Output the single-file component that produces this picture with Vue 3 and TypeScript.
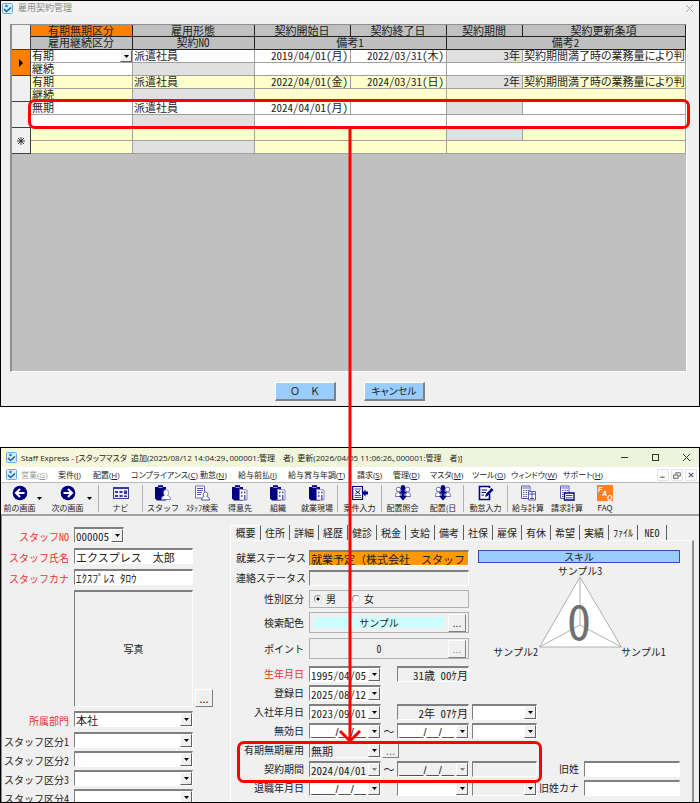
<script setup lang="ts">
import { ref } from 'vue'

interface Contract {
  term: string
  keep: string
  form: string
  start: string
  end: string
  period: string
  clause: string
}

interface Tool {
  icon: string
  label: string
  width: number
  menu?: boolean
  sep?: boolean
}

const contracts: Contract[] = [
  { term: '有期', keep: '継続', form: '派遣社員', start: '2019/04/01(月)', end: '2022/03/31(木)', period: '3年', clause: '契約期間満了時の業務量により判' },
  { term: '有期', keep: '継続', form: '派遣社員', start: '2022/04/01(金)', end: '2024/03/31(日)', period: '2年', clause: '契約期間満了時の業務量により判' },
  { term: '無期', keep: '', form: '派遣社員', start: '2024/04/01(月)', end: '', period: '', clause: '' },
  { term: '', keep: '', form: '', start: '', end: '', period: '', clause: '' },
]

const menus = [
  { name: '営業', key: 'G', width: 37, off: true },
  { name: '案件', key: 'J', width: 35 },
  { name: '配置', key: 'H', width: 38 },
  { name: 'コンプライアンス', key: 'C', width: 69 },
  { name: '勤怠', key: 'N', width: 38 },
  { name: '給与前払', key: 'I', width: 50 },
  { name: '給与賞与年調', key: 'T', width: 69 },
  { name: '請求', key: 'S', width: 36 },
  { name: '管理', key: 'D', width: 37 },
  { name: 'マスタ', key: 'M', width: 42 },
  { name: 'ツール', key: 'O', width: 39 },
  { name: 'ウィンドウ', key: 'W', width: 52 },
  { name: 'サポート', key: 'H', width: 44 },
]

const tools: Tool[] = [
  { icon: 'back', label: '前の画面', width: 46, menu: true },
  { icon: 'next', label: '次の画面', width: 51, menu: true, sep: true },
  { icon: 'navi', label: 'ナビ', width: 44, sep: true },
  { icon: 'staff', label: 'スタッフ', width: 40 },
  { icon: 'search', label: 'ｽﾀｯﾌ検索', width: 38 },
  { icon: 'building', label: '得意先', width: 38 },
  { icon: 'building', label: '組織', width: 38 },
  { icon: 'building', label: '就業現場', width: 41, sep: true },
  { icon: 'entry', label: '案件入力', width: 44, sep: true },
  { icon: 'people', label: '配置照会', width: 41 },
  { icon: 'people', label: '配置(日', width: 41, sep: true },
  { icon: 'pencil', label: '勤怠入力', width: 44, sep: true },
  { icon: 'payroll', label: '給与計算', width: 40 },
  { icon: 'invoice', label: '請求計算', width: 38 },
  { icon: 'faq', label: 'FAQ', width: 38 },
]

const tabs = ['概要', '住所', '詳細', '経歴', '健診', '税金', '支給', '備考', '社保', '雇保', '有休', '希望', '実績', 'ﾌｧｲﾙ', 'NEO']
const activeTab = ref('概要')
const gender = ref('男')
const categories = ['スタッフ区分1', 'スタッフ区分2', 'スタッフ区分3', 'スタッフ区分4']
const blank = '____/__/__'
</script>

<template>
  <main class="page">
    <section class="dialog">
      <header class="dialog-title">
        <svg class="app-icon" viewBox="0 0 11 11" aria-hidden="true">
          <rect x=".5" y=".5" width="10" height="10" rx="1" fill="#d8ecfc" stroke="#6aaee6" />
          <path d="M2 6 4.500 8.500 9 4.500" fill="none" stroke="#0b62b4" stroke-width="1.600" />
          <circle cx="4.500" cy="3" r="1.300" fill="#1c7fd0" />
        </svg>
        <h1>雇用契約管理</h1>
        <button class="bare close" type="button" aria-label="閉じる">
          <svg viewBox="0 0 9 9"><path d="M1 1 8 8M8 1 1 8" stroke="#a4a4a4" fill="none" /></svg>
        </button>
      </header>

      <div class="grid-panel">
        <table class="contracts">
          <colgroup>
            <col class="c-mark" /><col class="c-term" /><col class="c-form" /><col class="c-date" />
            <col class="c-date" /><col class="c-period" /><col />
          </colgroup>
          <thead>
            <tr>
              <th rowspan="2" class="mark"></th>
              <th class="hot">有期無期区分</th>
              <th>雇用形態</th>
              <th>契約開始日</th>
              <th>契約終了日</th>
              <th>契約期間</th>
              <th>契約更新条項</th>
            </tr>
            <tr>
              <th>雇用継続区分</th>
              <th>契約NO</th>
              <th colspan="2">備考1</th>
              <th colspan="2">備考2</th>
            </tr>
          </thead>
          <tbody v-for="(c, i) in contracts" :key="i" :class="{ alt: i % 2 === 1 }">
            <tr>
              <th rowspan="2" class="mark" :class="{ hot: i === 0 }">
                <svg v-if="i === 0" viewBox="0 0 6 8" width="6" height="8"><path d="M1 0 5 4 1 8Z" /></svg>
                <svg v-else-if="i === 3" viewBox="0 0 8 8" width="8" height="8"><path d="M4 0V8M0 4H8M1 1 7 7M7 1 1 7" stroke="#222" stroke-width=".9" /></svg>
              </th>
              <td>
                <span v-if="i === 0" class="combo cell-combo">
                  <select aria-label="有期無期区分"><option>{{ c.term }}</option></select>
                  <i class="drop"><svg viewBox="0 0 5 3"><path d="M0 0H5L2.500 3Z" /></svg></i>
                </span>
                <template v-else>{{ c.term }}</template>
              </td>
              <td>{{ c.form }}</td>
              <td class="num">{{ c.start }}</td>
              <td class="num">{{ c.end }}</td>
              <td class="num locked">{{ c.period }}</td>
              <td class="clause">{{ c.clause }}</td>
            </tr>
            <tr>
              <td>{{ c.keep }}</td>
              <td class="locked"></td>
              <td colspan="2"></td>
              <td colspan="2"></td>
            </tr>
          </tbody>
        </table>
      </div>

      <footer class="dialog-actions">
        <button type="button" class="blue plain">Ｏ　Ｋ</button>
        <button type="button" class="blue kana">キャンセル</button>
      </footer>
    </section>

    <section class="app">
      <header class="app-title">
        <svg class="app-icon" viewBox="0 0 11 11" aria-hidden="true">
          <rect x=".5" y=".5" width="10" height="10" rx="1" fill="#d8ecfc" stroke="#6aaee6" />
          <path d="M2 6 4.500 8.500 9 4.500" fill="none" stroke="#0b62b4" stroke-width="1.600" />
          <circle cx="4.500" cy="3" r="1.300" fill="#1c7fd0" />
        </svg>
        <h2>Staff Express - [スタッフマスタ&ensp;追加(2025/08/12 14:04:29、000001:管理　者)&ensp;更新(2026/04/05 11:06:26、000001:管理　者)]</h2>
        <div class="win-buttons">
          <button class="bare" type="button" aria-label="最小化"><svg viewBox="0 0 9 9"><path d="M1 4.500H8" stroke="#333" fill="none" /></svg></button>
          <button class="bare" type="button" aria-label="最大化"><svg viewBox="0 0 9 9"><rect x="1.500" y="1.500" width="6" height="6" stroke="#333" fill="none" /></svg></button>
          <button class="bare" type="button" aria-label="終了"><svg viewBox="0 0 9 9"><path d="M1 1 8 8M8 1 1 8" stroke="#333" fill="none" /></svg></button>
        </div>
      </header>

      <nav class="menu">
        <svg class="app-icon" viewBox="0 0 11 11" aria-hidden="true">
          <rect x=".5" y=".5" width="10" height="10" rx="1" fill="#d8ecfc" stroke="#6aaee6" />
          <path d="M2 6 4.500 8.500 9 4.500" fill="none" stroke="#0b62b4" stroke-width="1.600" />
          <circle cx="4.500" cy="3" r="1.300" fill="#1c7fd0" />
        </svg>
        <button
          v-for="m in menus"
          :key="m.name"
          type="button"
          class="bare menu-item"
          :class="{ off: m.off }"
          :style="{ width: m.width + 'px' }"
        >{{ m.name }}(<u>{{ m.key }}</u>)</button>
        <div class="child-buttons">
          <button type="button" aria-label="子画面を最小化"><svg viewBox="0 0 9 9"><path d="M2 6.500H6" stroke="#556" fill="none" /></svg></button>
          <button type="button" aria-label="子画面を元に戻す"><svg viewBox="0 0 9 9"><path d="M3.500 4V2.500H7.500V5.500H6M1.500 4.500H5.500V7.500H1.500Z" stroke="#556" fill="none" stroke-width=".8" /></svg></button>
          <button type="button" aria-label="子画面を閉じる"><svg viewBox="0 0 9 9"><path d="M2.500 2.500 6.500 6.500M6.500 2.500 2.500 6.500" stroke="#556" fill="none" /></svg></button>
        </div>
      </nav>

      <div class="toolbar">
        <div
          v-for="t in tools"
          :key="t.label"
          class="tool-slot"
          :class="{ sep: t.sep }"
          :style="{ width: t.width + 'px' }"
        >
          <button type="button" class="bare tool">
            <svg viewBox="0 0 16 16" class="tool-icon" aria-hidden="true">
              <template v-if="t.icon === 'back'">
                <circle cx="8" cy="8" r="7.300" fill="#000080" />
                <path d="M12.500 8H4.500M8 4 4 8 8 12" fill="none" stroke="#fff" stroke-width="2" />
              </template>
              <template v-else-if="t.icon === 'next'">
                <circle cx="8" cy="8" r="7.300" fill="#000080" />
                <path d="M3.500 8H11.500M8 4 12 8 8 12" fill="none" stroke="#fff" stroke-width="2" />
              </template>
              <template v-else-if="t.icon === 'navi'">
                <rect x=".5" y="2.500" width="15" height="11" fill="#e8e8ff" stroke="#3a3a9c" />
                <path d="M1 3.500H15" stroke="#3a3a9c" />
                <path d="M2 6H5V8H2ZM6.500 6H9.500V8H6.500ZM11 5.500H14V9H11ZM2 10H5V12H2ZM6.500 10H9.500V12H6.500ZM11 10.500H14V12H11Z" fill="#3a3a9c" />
              </template>
              <template v-else-if="t.icon === 'staff'">
                <path d="M0 2H3V.3H8V2H11V15.500H2L0 13.500Z" fill="#000080" />
                <path d="M3.500 2.500H7.500" stroke="#c8c8f0" stroke-width=".8" />
                <path d="M6.500 14.500C6.500 11.500 8 11 9.500 10.500 7.500 8 9 4.500 11 4.500S14.500 8 12.500 10.500C14 11 15.500 11.500 15.500 14.500Z" fill="#fff" stroke="#6a6ab8" stroke-width=".8" />
              </template>
              <template v-else-if="t.icon === 'search'">
                <path d="M1.500 1H10.500V13H1.500Z" fill="#fff" stroke="#6a6ab8" />
                <path d="M3 3.500H9M3 5.500H9M3 7.500H8M3 9.500H7" stroke="#3a3a9c" stroke-width=".9" />
                <path d="M7.500 15C7.500 12.500 9 12 10 11.500 8.500 9.500 9.500 7 11.500 7S14.500 9.500 13 11.500C14 12 15.500 12.500 15.500 15Z" fill="#fff" stroke="#3a3a9c" stroke-width=".9" />
              </template>
              <template v-else-if="t.icon === 'building'">
                <path d="M0 2H3V.3H8V2H11V15.500H2L0 13.500Z" fill="#000080" />
                <path d="M3.500 2.500H7.500" stroke="#c8c8f0" stroke-width=".8" />
                <path d="M7.500 4 15 5V15H7.500Z" fill="#fff" stroke="#6a6ab8" stroke-width=".8" />
                <path d="M9 6.500H10.500V8.500H9ZM12 6.500H13.500V8.500H12ZM9 10H10.500V12H9ZM12 10H13.500V15H12Z" fill="#5a5ab0" />
              </template>
              <template v-else-if="t.icon === 'entry'">
                <path d="M.7 1.500H10.500V14.500H.7Z" fill="#fff" stroke="#000080" stroke-width="1.200" />
                <path d="M2.500 4H9M2.500 10.500H9M2.500 12.500H9" stroke="#3a3a9c" stroke-width=".9" />
                <path d="M3.500 5.500 8 9M8 5.500 3.500 9" stroke="#000080" />
                <path d="M16 6.500V9.500H13.500V11.500L10 8 13.500 4.500V6.500Z" fill="#000080" />
              </template>
              <template v-else-if="t.icon === 'people'">
                <circle cx="3.500" cy="4.500" r="2.300" fill="#fff" stroke="#5a5ab0" stroke-width=".9" />
                <circle cx="12.500" cy="4.500" r="2.300" fill="#fff" stroke="#5a5ab0" stroke-width=".9" />
                <path d="M.5 11.500C.5 8 2 7 4 7L6 10 4 11.500Z M15.500 11.500C15.500 8 14 7 12 7L10 10 12 11.500Z" fill="#fff" stroke="#5a5ab0" stroke-width=".9" />
                <path d="M8 0C10.500 0 10.800 3 9.500 5.500L12 8.500H9.500V11H12L8 15.500 4 11H6.500V8.500H4L6.500 5.500C5.200 3 5.500 0 8 0Z" fill="#000080" />
              </template>
              <template v-else-if="t.icon === 'pencil'">
                <path d="M11.500 9V14.500H1.500V1.500H11.500V3" fill="#fff" stroke="#000080" stroke-width="1.600" />
                <path d="M3.500 5H9M3.500 7.500H8M3.500 10H6" stroke="#000080" stroke-width="1.200" />
                <path d="M13.500 3 15.500 5 9.500 11 7 12 8 9Z" fill="#000080" />
              </template>
              <template v-else-if="t.icon === 'payroll' || t.icon === 'invoice'">
                <path d="M1.500 1H10V13.500H1.500Z" fill="#fff" stroke="#5a5ab0" />
                <path d="M2.500 3H9M3 5.500H4.500M5.500 5.500H7M7.500 5.500H9M3 7.500H4.500M5.500 7.500H7M3 9.500H4.500M5.500 9.500H7M3 11.500H4.500M5.500 11.500H7" stroke="#5a5ab0" stroke-width="1.200" />
                <g v-if="t.icon === 'payroll'">
                  <path d="M8.500 6.500H15.500V15H8.500Z" fill="#fff" stroke="#5a5ab0" />
                  <path d="M9 9H15M12 7V14M10 13.500H14" stroke="#3a3a9c" stroke-width=".9" />
                </g>
                <g v-else>
                  <path d="M5.500 8H15V15H5.500Z" fill="#fff" stroke="#000080" stroke-width="1.300" />
                  <path d="M7 10.500H13.500M7 12.800H13.500" stroke="#3a3a9c" />
                </g>
              </template>
              <template v-else>
                <rect width="16" height="16" fill="#ff7f27" />
                <text x="1" y="6.500" class="faq-letter">F</text>
                <text x="5" y="10.500" class="faq-letter">A</text>
                <text x="10" y="14.500" class="faq-letter">Q</text>
              </template>
            </svg>
            <span>{{ t.label }}</span>
          </button>
          <svg v-if="t.menu" class="tool-menu" viewBox="0 0 5 3"><path d="M0 0H5L2.500 3Z" /></svg>
        </div>
      </div>

      <div class="body">
        <form class="left" @submit.prevent>
          <div class="row r21">
            <label for="no" class="red">スタッフNO</label>
            <span class="combo no">
              <select id="no"><option>000005</option></select>
              <i class="drop"><svg viewBox="0 0 5 3"><path d="M0 0H5L2.500 3Z" /></svg></i>
            </span>
          </div>
          <div class="row r21">
            <label for="name" class="red">スタッフ氏名</label>
            <input id="name" class="box wide plain" value="エクスプレス　太郎" />
          </div>
          <div class="row r21">
            <label for="kana" class="red">スタッフカナ</label>
            <input id="kana" class="box wide" value="ｴｸｽﾌﾟﾚｽ ﾀﾛｳ" />
          </div>
          <div class="photo-row">
            <div class="photo">写真</div>
            <button type="button" class="more">...</button>
          </div>
          <div class="row r21">
            <label for="dept" class="red">所属部門</label>
            <span class="combo wide">
              <select id="dept"><option>本社</option></select>
              <i class="drop"><svg viewBox="0 0 5 3"><path d="M0 0H5L2.500 3Z" /></svg></i>
            </span>
          </div>
          <div v-for="(c, i) in categories" :key="c" class="row r19">
            <label :for="'cat' + i">{{ c }}</label>
            <span class="combo wide">
              <select :id="'cat' + i"><option></option></select>
              <i class="drop"><svg viewBox="0 0 5 3"><path d="M0 0H5L2.500 3Z" /></svg></i>
            </span>
          </div>
        </form>

        <div class="right">
          <div class="tabs" role="tablist">
            <button
              v-for="t in tabs"
              :key="t"
              type="button"
              role="tab"
              class="tab"
              :class="{ active: t === activeTab }"
              :aria-selected="t === activeTab"
              @click="activeTab = t"
            >{{ t }}</button>
          </div>

          <form class="sheet" @submit.prevent>
            <div class="upper">
              <div class="status">
                <div class="row r20">
                  <label for="work">就業ステータス</label>
                  <input id="work" class="box fill orange plain" readonly value="就業予定（株式会社　スタッフ" />
                </div>
                <div class="row r20">
                  <label for="contact">連絡ステータス</label>
                  <input id="contact" class="box fill grey" readonly />
                </div>
                <div class="row r22">
                  <span class="label">性別区分</span>
                  <div class="frame" role="radiogroup" aria-label="性別区分">
                    <label class="radio"><input v-model="gender" type="radio" name="gender" value="男" />男</label>
                    <label class="radio"><input v-model="gender" type="radio" name="gender" value="女" />女</label>
                  </div>
                </div>
                <div class="row r26">
                  <span class="label">検索配色</span>
                  <div class="frame tall">
                    <output class="swatch">サンプル</output>
                    <button type="button" class="more">...</button>
                  </div>
                </div>
                <div class="row r26">
                  <span class="label">ポイント</span>
                  <div class="frame tall">
                    <output class="point">0</output>
                    <button type="button" class="more dim">...</button>
                  </div>
                </div>
              </div>
              <div class="skill">
                <h3>スキル</h3>
                <svg viewBox="0 0 202 96" class="radar">
                  <path d="M102 14 61.500 84H143.500Z" fill="#fff" stroke="#b0b0b0" />
                  <path d="M102 14V62L61.500 84M102 62 143.500 84" fill="none" stroke="#b0b0b0" />
                  <text x="102" y="12" text-anchor="middle">サンプル3</text>
                  <text x="60" y="93" text-anchor="end">サンプル2</text>
                  <text x="143" y="93">サンプル1</text>
                  <text x="101" y="77" text-anchor="middle" class="score">0</text>
                </svg>
              </div>
            </div>

            <div class="lower">
              <div class="row r19">
                <label for="birth" class="red">生年月日</label>
                <span class="combo date"><input id="birth" value="1995/04/05" /><button type="button" class="drop" aria-label="日付選択"><svg viewBox="0 0 5 3"><path d="M0 0H5L2.500 3Z" /></svg></button></span>
                <span class="link"></span>
                <input class="box date grey num" readonly aria-label="年齢" value="31歳 00ｹ月" />
              </div>
              <div class="row r19">
                <label for="reg">登録日</label>
                <span class="combo date"><input id="reg" value="2025/08/12" /><button type="button" class="drop" aria-label="日付選択"><svg viewBox="0 0 5 3"><path d="M0 0H5L2.500 3Z" /></svg></button></span>
              </div>
              <div class="row r19">
                <label for="join">入社年月日</label>
                <span class="combo date"><input id="join" value="2023/09/01" /><button type="button" class="drop" aria-label="日付選択"><svg viewBox="0 0 5 3"><path d="M0 0H5L2.500 3Z" /></svg></button></span>
                <span class="link"></span>
                <input class="box date grey num" readonly aria-label="勤続年数" value="2年 07ｹ月" />
                <span class="combo third"><select aria-label="入社区分"><option></option></select><i class="drop"><svg viewBox="0 0 5 3"><path d="M0 0H5L2.500 3Z" /></svg></i></span>
              </div>
              <div class="row r19">
                <label for="void">無効日</label>
                <span class="combo date"><input id="void" class="mask" :value="blank" /><button type="button" class="drop" aria-label="日付選択"><svg viewBox="0 0 5 3"><path d="M0 0H5L2.500 3Z" /></svg></button></span>
                <span class="link">～</span>
                <span class="combo date"><input class="mask" aria-label="無効日終了" :value="blank" /><button type="button" class="drop" aria-label="日付選択"><svg viewBox="0 0 5 3"><path d="M0 0H5L2.500 3Z" /></svg></button></span>
                <span class="combo third"><select aria-label="無効区分"><option></option></select><i class="drop"><svg viewBox="0 0 5 3"><path d="M0 0H5L2.500 3Z" /></svg></i></span>
              </div>
              <div class="row r19">
                <label for="employ">有期無期雇用</label>
                <span class="combo date grey"><select id="employ"><option>無期</option></select><i class="drop"><svg viewBox="0 0 5 3"><path d="M0 0H5L2.500 3Z" /></svg></i></span>
                <button type="button" class="more small">...</button>
              </div>
              <div class="row r19">
                <label for="span">契約期間</label>
                <span class="combo date grey"><input id="span" readonly value="2024/04/01" /><button type="button" class="drop dim" disabled aria-label="日付選択"><svg viewBox="0 0 5 3"><path d="M0 0H5L2.500 3Z" /></svg></button></span>
                <span class="link">～</span>
                <span class="combo date grey"><input class="mask" aria-label="契約期間終了" readonly :value="blank" /><button type="button" class="drop dim" disabled aria-label="日付選択"><svg viewBox="0 0 5 3"><path d="M0 0H5L2.500 3Z" /></svg></button></span>
                <input class="box third grey" readonly aria-label="期間" />
                <label for="old" class="old">旧姓</label>
                <input id="old" class="box fill" />
              </div>
              <div class="row r19">
                <label for="leave">退職年月日</label>
                <span class="combo date"><input id="leave" class="mask" :value="blank" /><button type="button" class="drop" aria-label="日付選択"><svg viewBox="0 0 5 3"><path d="M0 0H5L2.500 3Z" /></svg></button></span>
                <span class="link"></span>
                <span class="combo date"><select aria-label="退職区分"><option></option></select><i class="drop"><svg viewBox="0 0 5 3"><path d="M0 0H5L2.500 3Z" /></svg></i></span>
                <span class="combo third grey"><select aria-label="退職理由"><option></option></select><i class="drop"><svg viewBox="0 0 5 3"><path d="M0 0H5L2.500 3Z" /></svg></i></span>
                <label for="oldkana" class="old">旧姓カナ</label>
                <input id="oldkana" class="box fill" />
              </div>
            </div>
          </form>
        </div>
      </div>
    </section>

    <div class="callout callout-row"></div>
    <svg class="arrow" viewBox="0 0 24 616" aria-hidden="true">
      <path d="M12 0V613M2 603 12 613 22 603" fill="none" stroke="#f00" stroke-width="3" />
    </svg>
    <div class="callout callout-field"></div>
  </main>
</template>

<style>
body {
  margin: 0;
  background: #fff;
}
</style>

<style scoped>
.page {
  position: relative;
  box-sizing: border-box;
  display: flex;
  flex-direction: column;
  gap: 40px;
  height: 100vh;
  overflow: hidden;
  font-family: "Noto Sans CJK JP", sans-serif;
  font-feature-settings: "hwid";
  font-size: 11px;
  line-height: 12px;
  color: #222;
}
.page *,
.page *::before,
.page *::after {
  box-sizing: border-box;
}
button,
input,
select,
output {
  margin: 0;
  padding: 0;
  font: inherit;
  font-feature-settings: inherit;
  color: inherit;
}
h1,
h2,
h3 {
  margin: 0;
  font-weight: 400;
}
svg {
  display: block;
}
.bare {
  border: 0;
  background: none;
}
.plain {
  font-feature-settings: normal;
}
.app-icon {
  flex: none;
  width: 11px;
  height: 11px;
}

/* contract dialog */
.dialog {
  flex: none;
  display: flex;
  flex-direction: column;
  border: 1px solid #000;
  background: #f0f0f0;
}
.dialog-title {
  display: flex;
  align-items: center;
  gap: 5px;
  height: 14px;
  padding: 0 5px 0 1px;
  background: #f3f3f3;
}
.dialog-title h1 {
  flex: 1;
  font-size: 9px;
  color: #888;
}
.bare svg {
  width: 9px;
  height: 9px;
}
.grid-panel {
  height: 348px;
  margin: 9px 12px 0 9px;
  border: 1px solid #909090;
  border-left-width: 2px;
  border-right-color: #fff;
  border-bottom-color: #fff;
  background: #c0c0c0;
}
.contracts {
  width: 100%;
  table-layout: fixed;
  border-spacing: 0;
}
.c-mark { width: 19px; }
.c-term { width: 102px; }
.c-form { width: 122px; }
.c-date { width: 96px; }
.c-period { width: 76px; }
.contracts th,
.contracts td {
  height: 13px;
  padding: 0 2px 1px 1px;
  white-space: nowrap;
  font-weight: 400;
  line-height: 11px;
  text-align: left;
  border-right: 1px solid #a0a0a0;
  border-bottom: 1px solid #a0a0a0;
  background: #fff;
}
.contracts thead th {
  text-align: center;
  background: #c0c0c0;
  border-color: #202020;
}
.contracts thead tr:first-child th {
  height: 12px;
  padding-bottom: 0;
}
.contracts .mark,
.contracts thead .mark {
  padding: 0;
  background: #f0f0f0;
  border-color: #404040;
}
.contracts .mark svg {
  margin: 0 auto;
}
.contracts .alt td {
  background: #ffffcc;
}
.contracts .locked,
.contracts .alt .locked {
  background: #e0e0e0;
}
.contracts .hot,
.contracts thead .hot {
  background: #ff8000;
}
.contracts .num {
  text-align: right;
}
.contracts .clause {
  padding-right: 0;
  font-feature-settings: "palt";
}
.dialog-actions {
  display: flex;
  justify-content: center;
  gap: 28px;
  padding: 10px 0 5px;
}
.blue {
  width: 61px;
  height: 19px;
  background: #99ccff;
  border: 1px solid #fff;
  border-right: 2px solid #808080;
  border-bottom: 2px solid #808080;
  font-size: 10px;
}
.kana {
  font-feature-settings: "palt";
}

/* staff master window */
.app {
  flex: 1;
  min-height: 0;
  display: flex;
  flex-direction: column;
  overflow: hidden;
  border: 1px solid #000;
  background: #f0f0f0;
}
.app-title,
.menu {
  flex: none;
  display: flex;
  align-items: center;
  height: 19px;
  padding: 0 8px 0 5px;
  gap: 4px;
  background: linear-gradient(90deg, #f8f7da, #f0f5dc 40%, #eef4dc);
  font-family: "Open Sans", "Noto Sans CJK JP", sans-serif;
  font-feature-settings: "palt";
  font-size: 8px;
}
.app-title h2 {
  flex: 1;
  font-size: 8px;
  white-space: nowrap;
}
.win-buttons {
  display: flex;
  gap: 22px;
}
.menu {
  height: 15px;
  gap: 0;
  padding-right: 2px;
  background: #fff;
}
.menu .app-icon {
  margin-right: 4px;
}
.menu-item {
  flex: none;
  text-align: left;
  white-space: nowrap;
}
.off {
  color: #999;
}
.child-buttons {
  display: flex;
  gap: 2px;
  margin-left: auto;
}
.child-buttons button {
  width: 12px;
  height: 12px;
  border: 1px solid #e4e4e4;
  background: #fafafa;
}
.toolbar {
  flex: none;
  display: flex;
  height: 34px;
  padding-left: 1px;
  border-top: 1px solid #b8b8b8;
  border-bottom: 2px solid #a0a0a0;
  font-feature-settings: normal;
}
.tool-slot {
  flex: none;
  display: flex;
  align-items: center;
  margin: 2px 0;
  font-size: 8px;
}
.sep {
  border-right: 1px solid #b0b0b0;
}
.tool {
  flex: 1;
  display: flex;
  flex-direction: column;
  align-items: center;
  gap: 1px;
  white-space: nowrap;
  line-height: 11px;
}
.tool .tool-icon {
  width: 16px;
  height: 16px;
}
.tool-menu {
  flex: none;
  width: 5px;
  height: 3px;
  margin-right: 6px;
}
.faq-letter {
  fill: #fff;
  font: italic 700 7px "Liberation Sans", sans-serif;
}

.body {
  flex: 1;
  min-height: 0;
  display: flex;
  padding-left: 1px;
  border-left: 1px solid #909090;
}
.row {
  display: flex;
  align-items: flex-start;
}
.r19 { height: 19px; }
.r20 { height: 20px; }
.r21 { height: 21px; }
.r22 { height: 22px; }
.r26 { height: 26px; }
.row > label,
.row > .label {
  flex: none;
  width: 68px;
  padding-top: 2px;
  margin-right: 5px;
  text-align: right;
  white-space: nowrap;
  font-size: 10px;
}
.row > .red {
  color: #f03030;
}
.box,
.combo {
  flex: none;
  height: 16px;
  border: 1px solid #808080;
  border-top-width: 2px;
  border-right-color: #fff;
  border-bottom-color: #fff;
  border-radius: 0;
  background: #fff;
  padding-left: 1px;
  outline: 0;
}
.combo {
  display: grid;
  padding: 0;
}
.combo > input,
.combo > select {
  grid-area: 1 / 1;
  min-width: 0;
  width: 100%;
  height: 13px;
  padding-left: 1px;
  border: 0;
  border-radius: 0;
  background: transparent;
  appearance: none;
  outline: 0;
}
.combo > .mask {
  font-family: "Liberation Sans", sans-serif;
}
.drop {
  grid-area: 1 / 1;
  justify-self: end;
  width: 12px;
  height: 13px;
  display: grid;
  place-items: center;
  background: #f0f0f0;
  border: 1px solid #fff;
  border-right-color: #606060;
  border-bottom-color: #606060;
  pointer-events: none;
}
button.drop {
  pointer-events: auto;
}
.drop svg {
  width: 5px;
  height: 3px;
}
.drop.dim svg {
  fill: #808080;
}
.cell-combo {
  height: 11px;
  margin: 0 -2px 0 -1px;
  border: 0;
}
.cell-combo > select {
  height: 11px;
}
.cell-combo .drop {
  height: 12px;
}
.no { width: 50px; }
.wide { width: 119px; }
.date { width: 72px; }
.third {
  width: 65px;
  margin-left: 3px;
}
.fill {
  flex: 1;
  min-width: 0;
}
.grey {
  background: #f0f0f0;
}
.orange {
  background: #ff9900;
}
.num {
  text-align: right;
}
.link {
  flex: none;
  width: 16px;
  padding-top: 2px;
  text-align: center;
  font-feature-settings: normal;
}
.more {
  flex: none;
  width: 18px;
  height: 18px;
  border: 1px solid #fff;
  border-right-color: #808080;
  border-bottom-color: #808080;
  background: #f0f0f0;
  font-feature-settings: normal;
}
.more.dim {
  color: #888;
}
.more.small {
  width: 17px;
  height: 16px;
  margin-left: 1px;
  color: #777;
}

.left {
  flex: none;
  width: 227px;
  padding-top: 11px;
}
.left .row > label {
  width: 66px;
  padding-top: 4px;
}
.photo-row {
  display: flex;
  align-items: flex-end;
  gap: 2px;
  height: 121px;
  padding: 0 0 4px 71px;
}
.photo {
  display: grid;
  place-items: center;
  width: 119px;
  height: 117px;
  border: 1px solid #808080;
  border-top-width: 2px;
  border-right-color: #fff;
  border-bottom-color: #fff;
  font-size: 10px;
}

.right {
  flex: 1;
  min-width: 0;
  display: flex;
  flex-direction: column;
  margin: 9px 5px 0 0;
}
.tabs {
  flex: none;
  display: flex;
  height: 15px;
}
.tab {
  flex: none;
  width: 29px;
  border: 0;
  background: none;
  border-right: 1px solid #606060;
  font-size: 10px;
  white-space: nowrap;
}
.tab.active {
  width: 31px;
  border-top: 1px solid #fff;
  border-left: 1px solid #fff;
}
.sheet {
  flex: 1;
  min-height: 0;
  overflow: hidden;
  padding: 9px 12px 0 5px;
  border-left: 1px solid #fff;
  border-top: 1px solid #fafafa;
  border-right: 2px solid #909090;
}
.upper {
  display: flex;
  gap: 9px;
}
.status {
  flex: none;
  width: 233px;
  height: 116px;
}
.frame {
  flex: 1;
  display: flex;
  align-items: center;
  height: 18px;
  border: 1px solid #b0b0b0;
  font-size: 10px;
}
.frame.tall {
  height: 21px;
  padding: 0 2px 0 4px;
  gap: 4px;
}
.status .label {
  padding-top: 3px;
}
.status .r26 .label {
  padding-top: 5px;
}
.radio {
  display: flex;
  align-items: center;
  gap: 4px;
  width: 38px;
  padding-left: 4px;
}
.radio input {
  appearance: none;
  width: 8px;
  height: 8px;
  border: 1px solid #909090;
  border-right-color: #e0e0e0;
  border-bottom-color: #e0e0e0;
  border-radius: 50%;
  background: #fff;
}
.radio input:checked {
  background: radial-gradient(circle, #000 0 1px, #fff 2px);
}
.swatch,
.point {
  flex: 1;
  height: 11px;
  line-height: 11px;
  text-align: center;
}
.swatch {
  background: #ccffff;
}
.skill {
  flex: 1;
  min-width: 0;
}
.skill h3 {
  height: 13px;
  border: 1px solid #4048b0;
  background: #99ccff;
  text-align: center;
  font-size: 10px;
  line-height: 11px;
}
.radar {
  display: block;
  width: 100%;
  max-height: 96px;
  font-size: 10px;
  fill: #222;
}
.score {
  font-size: 48px;
  fill: #707070;
}
.old.old {
  width: 42px;
}

/* annotations over both windows */
.callout {
  position: absolute;
  border: 3px solid #f00;
  border-radius: 7px;
  pointer-events: none;
}
.callout-row {
  left: 28px;
  right: 10px;
  top: 99px;
  height: 30px;
}
.callout-field {
  left: 237px;
  top: 741px;
  width: 305px;
  height: 42px;
}
.arrow {
  position: absolute;
  left: 338px;
  top: 128px;
  width: 24px;
  height: 616px;
  pointer-events: none;
}
</style>
